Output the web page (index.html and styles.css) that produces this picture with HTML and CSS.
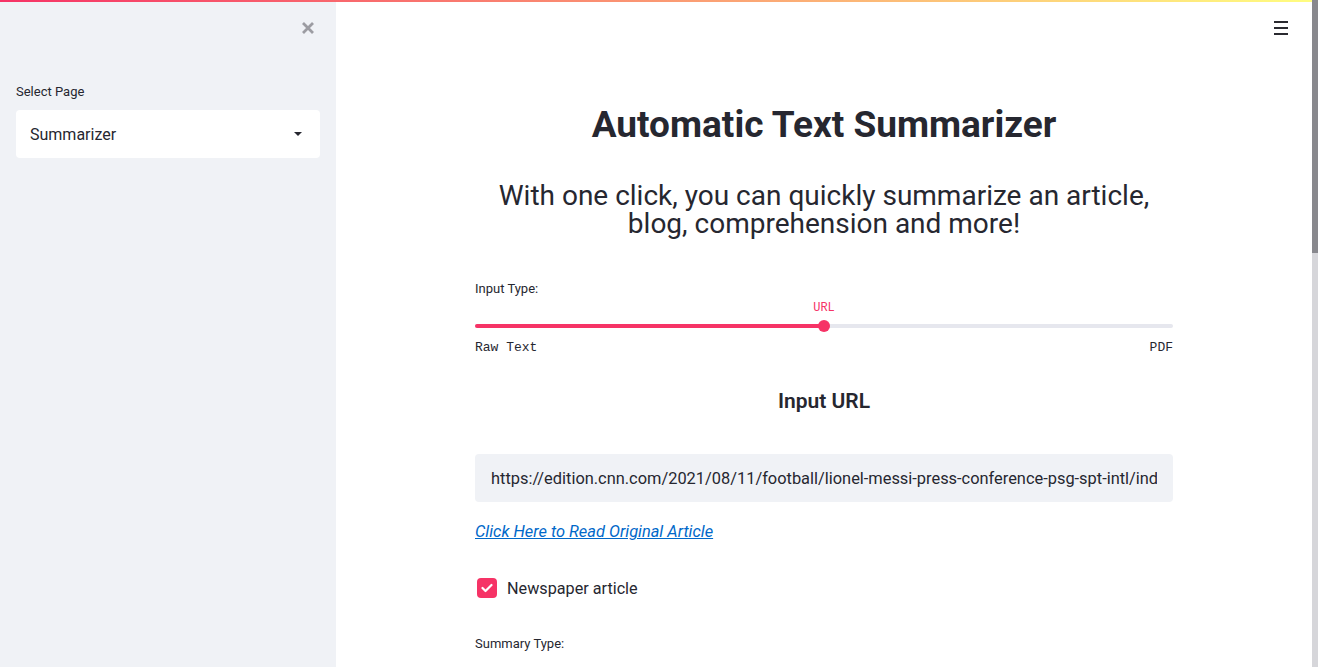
FILE: index.html
```html
<!DOCTYPE html>
<html lang="en">
<head>
<meta charset="utf-8">
<title>Automatic Text Summarizer</title>
<link rel="stylesheet" href="styles.css">
</head>
<body>
<div class="decoration"></div>
<div class="app">
  <aside class="sidebar">
    <div class="sidebar-head">
      <button class="close-btn" aria-label="Close sidebar">
        <svg width="14" height="14" viewBox="0 0 14 14"><path d="M2 2 L12 12 M12 2 L2 12" stroke="#9c9ca2" stroke-width="2.8" stroke-linecap="butt"/></svg>
      </button>
    </div>
    <div class="widget-label side-label">Select Page</div>
    <div class="selectbox">
      <span>Summarizer</span>
      <svg class="caret" width="8" height="4" viewBox="0 0 8 4"><path d="M0 0 H8 L4 4 Z" fill="#262730"/></svg>
    </div>
  </aside>
  <main class="main">
    <button class="menu-btn" aria-label="Menu">
      <span></span><span></span><span></span>
    </button>
    <div class="block">
      <h1 class="title">Automatic Text Summarizer</h1>
      <h3 class="subtitle">With one click, you can quickly summarize an article,<br>blog, comprehension and more!</h3>
      <div class="widget-label input-type">Input Type:</div>
      <div class="slider">
        <div class="slider-value">URL</div>
        <div class="track">
          <div class="track-fill"></div>
          <div class="thumb"></div>
        </div>
        <div class="slider-ends"><span>Raw Text</span><span>PDF</span></div>
      </div>
      <h4 class="section-head">Input URL</h4>
      <div class="textinput"><span class="textinput-value">https://edition.cnn.com/2021/08/11/football/lionel-messi-press-conference-psg-spt-intl/index.html</span></div>
      <a class="article-link" href="#">Click Here to Read Original Article</a>
      <label class="checkbox">
        <span class="box">
          <svg width="12" height="10" viewBox="0 0 12 10"><path d="M1.5 5 L4.5 8 L10.5 2" fill="none" stroke="#fff" stroke-width="2.2" stroke-linecap="round" stroke-linejoin="round"/></svg>
        </span>
        <span>Newspaper article</span>
      </label>
      <div class="widget-label summary-type">Summary Type:</div>
      <div class="radio-group">
        <div class="radio"><span class="dot"></span><span>Extractive</span></div>
        <div class="radio"><span class="dot"></span><span>Abstractive</span></div>
      </div>
    </div>
  </main>
  <div class="scrollbar"><div class="scroll-thumb"></div></div>
</div>
</body>
</html>
```
FILE: styles.css
```css
* { box-sizing: border-box; }
html, body {
  margin: 0;
  height: 100%;
  overflow: hidden;
}
body {
  font-family: Roboto, "Noto Sans", sans-serif;
  color: #262730;
  background: #ffffff;
}
.decoration {
  position: absolute;
  top: 0;
  left: 0;
  right: 6px;
  height: 2px;
  background: linear-gradient(90deg, #f63366, #fffd80);
  z-index: 10;
}
.app {
  display: flex;
  height: 667px;
}
.sidebar {
  width: 336px;
  flex: none;
  background: #f0f2f6;
  padding: 0 16px;
}
.sidebar-head {
  height: 56px;
  display: flex;
  align-items: center;
  justify-content: flex-end;
}
.close-btn {
  width: 24px;
  height: 24px;
  border: 0;
  background: none;
  padding: 0;
  display: flex;
  align-items: center;
  justify-content: center;
}
.widget-label {
  font-size: 13px;
  line-height: 16px;
  color: #262730;
}
.side-label { margin-top: 28px; }
.selectbox {
  margin-top: 10px;
  height: 48px;
  background: #fff;
  border-radius: 4px;
  display: flex;
  align-items: center;
  justify-content: space-between;
  padding: 0 18px 0 14px;
  font-size: 16px;
}
.main {
  flex: 1;
  position: relative;
  overflow: hidden;
}
.menu-btn {
  position: absolute;
  top: 21px;
  right: 24px;
  width: 14px;
  height: 14px;
  border: 0;
  padding: 0;
  background: none;
  display: flex;
  flex-direction: column;
  justify-content: space-between;
}
.menu-btn span {
  display: block;
  height: 2px;
  width: 14px;
  background: #2a2a30;
}
.block {
  width: 698px;
  margin: 0 auto;
  padding-top: 101px;
}
.title {
  margin: 0;
  text-align: center;
  font-size: 37px;
  line-height: 48px;
  font-weight: 700;
}
.subtitle {
  margin: 33px 0 0;
  text-align: center;
  font-size: 28px;
  line-height: 28px;
  font-weight: 400;
}
.input-type { margin-top: 43px; }
.slider { margin-top: 4px; }
.slider-value {
  text-align: center;
  font-family: "Liberation Mono", "DejaVu Sans Mono", monospace;
  font-size: 12px;
  line-height: 14px;
  color: #f63366;
}
.track {
  margin-top: 5px;
  height: 12px;
  position: relative;
  display: flex;
  align-items: center;
}
.track::before {
  content: "";
  flex: 1;
  height: 4px;
  border-radius: 2px;
  background: #e6e7ee;
}
.track-fill {
  position: absolute;
  left: 0;
  width: 50%;
  height: 4px;
  border-radius: 2px;
  background: #f63366;
}
.thumb {
  position: absolute;
  left: calc(50% - 6px);
  width: 12px;
  height: 12px;
  border-radius: 50%;
  background: #f63366;
}
.slider-ends {
  margin-top: 8px;
  display: flex;
  justify-content: space-between;
  font-family: "Liberation Mono", "DejaVu Sans Mono", monospace;
  font-size: 13px;
  line-height: 16px;
}
.section-head {
  margin: 33px 0 0;
  text-align: center;
  font-size: 21px;
  line-height: 24px;
  font-weight: 600;
}
.textinput {
  margin-top: 41px;
  height: 48px;
  background: #f0f2f6;
  border-radius: 4px;
  padding: 0 16px;
  display: flex;
  align-items: center;
  font-size: 16.4px;
}
.textinput-value {
  flex: 1;
  min-width: 0;
  white-space: nowrap;
  overflow: hidden;
}
.article-link {
  display: block;
  margin-top: 18px;
  width: max-content;
  font-size: 16.4px;
  line-height: 24px;
  font-style: italic;
  color: #0068c9;
  text-decoration: underline;
}
.checkbox {
  margin-top: 34px;
  height: 20px;
  display: flex;
  align-items: center;
  gap: 10px;
  font-size: 16.2px;
  padding-left: 2px;
}
.box {
  width: 20px;
  height: 20px;
  border-radius: 4px;
  background: #f63366;
  display: flex;
  align-items: center;
  justify-content: center;
}
.summary-type { margin-top: 38px; }
.radio-group {
  margin-top: 14px;
  display: flex;
  flex-direction: column;
  gap: 8px;
}
.radio {
  display: flex;
  align-items: center;
  gap: 10px;
  font-size: 16px;
  padding-left: 5px;
}
.dot {
  width: 16px;
  height: 16px;
  border-radius: 50%;
  border: 2px solid #a3a8b4;
}
.scrollbar {
  width: 6px;
  flex: none;
  background: #d6d6da;
}
.scroll-thumb {
  height: 253px;
  background: #88888d;
}
```
